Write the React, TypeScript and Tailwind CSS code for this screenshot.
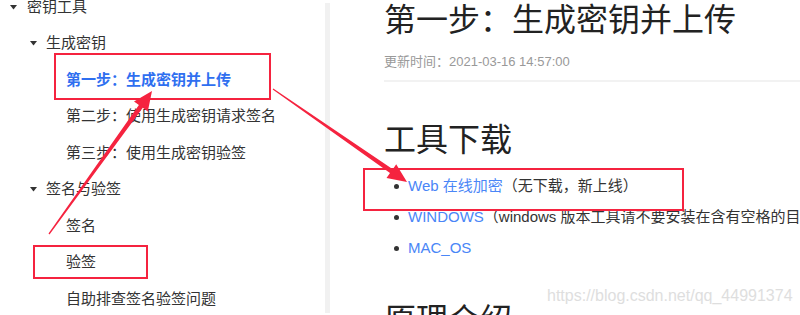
import type { ReactNode } from 'react'

const FONT = '"Liberation Sans", "Noto Sans CJK SC", sans-serif'
const RED = '#f5233f'

type NavRow = { label: string; level: 0 | 1 | 2; caret?: boolean; active?: boolean }

const NAV: NavRow[] = [
  { label: '密钥工具', level: 0, caret: true },
  { label: '生成密钥', level: 1, caret: true },
  { label: '第一步：生成密钥并上传', level: 2, active: true },
  { label: '第二步：使用生成密钥请求签名', level: 2 },
  { label: '第三步：使用生成密钥验签', level: 2 },
  { label: '签名与验签', level: 1, caret: true },
  { label: '签名', level: 2 },
  { label: '验签', level: 2 },
  { label: '自助排查签名验签问题', level: 2 },
]

const INDENT = ['pl-[27px]', 'pl-[46px]', 'pl-[66px]']

function Caret({ level }: { level: number }) {
  return (
    <svg
      width="7"
      height="5"
      viewBox="0 0 7 5"
      className={level === 0 ? 'absolute left-[10px] top-[16px]' : 'absolute left-[30px] top-[16px]'}
    >
      <path d="M0 0h7L3.5 4.5z" fill="#333" />
    </svg>
  )
}

// tapered arrow: thin tail, thick shaft near the head, wide triangular head
function arrowPoints(x1: number, y1: number, x2: number, y2: number) {
  const dx = x2 - x1
  const dy = y2 - y1
  const len = Math.hypot(dx, dy)
  const ux = dx / len
  const uy = dy / len
  const nx = -uy
  const ny = ux
  const head = 19
  const hw = 8.5
  const sw = 2.4
  const tw = 0.6
  const bx = x2 - ux * head
  const by = y2 - uy * head
  const p = (x: number, y: number) => `${x.toFixed(1)},${y.toFixed(1)}`
  return [
    p(x1 + nx * tw, y1 + ny * tw),
    p(bx + nx * sw, by + ny * sw),
    p(bx + nx * hw, by + ny * hw),
    p(x2, y2),
    p(bx - nx * hw, by - ny * hw),
    p(bx - nx * sw, by - ny * sw),
    p(x1 - nx * tw, y1 - ny * tw),
  ].join(' ')
}

function Bullet({ children }: { children: ReactNode }) {
  return (
    <li className="flex h-[31px] items-center whitespace-nowrap">
      <span className="ml-[10px] mr-[9px] size-[5px] shrink-0 rounded-full bg-[#333]" />
      {children}
    </li>
  )
}

export default function App() {
  return (
    <div
      className="relative flex h-[315px] w-[800px] overflow-hidden bg-white text-[#333]"
      style={{ fontFamily: FONT }}
    >
      {/* Sidebar tree */}
      <nav className="w-[325px] shrink-0">
        <ul className="-mt-[11.25px]">
          {NAV.map((row) => (
            <li
              key={row.label}
              className={`relative flex h-[36.5px] items-center whitespace-nowrap text-[15px] ${INDENT[row.level]} ${
                row.active ? 'font-bold text-[#2f6ff0]' : 'text-[#333]'
              }`}
            >
              {row.caret && <Caret level={row.level} />}
              {row.label}
            </li>
          ))}
        </ul>
      </nav>

      {/* Scrollbar track */}
      <div className="mt-[3px] h-[310px] w-[5px] shrink-0 bg-[#f1f1f1]" />

      {/* Article */}
      <main className="min-w-0 flex-1 pl-[54px]">
        <h1 className="h-[40px] whitespace-nowrap text-[32px] leading-[40px] text-[#222]">
          第一步：生成密钥并上传
        </h1>
        <p className="mt-[12px] h-[20px] text-[13px] leading-[20px] text-[#999]">
          更新时间：2021-03-16 14:57:00
        </p>
        <div className="mt-[8px] h-[2px] bg-[#f2f2f2]" />

        <h2 className="mt-[38px] h-[40px] text-[32px] leading-[40px] text-[#222]">工具下载</h2>
        <ul className="mt-[10.5px] text-[15px] text-[#333]">
          <Bullet>
            <span className="text-[#4a86f7]">Web 在线加密</span>
            <span>（无下载，新上线）</span>
          </Bullet>
          <Bullet>
            <span className="text-[#4a86f7]">WINDOWS</span>
            <span>（windows 版本工具请不要安装在含有空格的目录下）</span>
          </Bullet>
          <Bullet>
            <span className="text-[#4a86f7]">MAC_OS</span>
          </Bullet>
        </ul>

        <h2 className="mt-[36.5px] h-[40px] whitespace-nowrap text-[32px] leading-[40px] text-[#222]">
          原理介绍
        </h2>
      </main>

      {/* Watermark */}
      <span className="pointer-events-none absolute left-[547px] top-[286px] whitespace-nowrap text-[16px] leading-[20px] text-[#dedede]">
        https://blog.csdn.net/qq_44991374
      </span>

      {/* Annotation boxes */}
      <div className="pointer-events-none absolute left-[54px] top-[53px] h-[47px] w-[217px] border-[2.5px] border-[#f5233f]" />
      <div className="pointer-events-none absolute left-[33px] top-[245px] h-[34px] w-[115px] border-[2.5px] border-[#f5233f]" />
      <div className="pointer-events-none absolute left-[363px] top-[168px] h-[43px] w-[321px] border-[2.5px] border-[#f5233f]" />

      {/* Annotation arrows */}
      <svg className="pointer-events-none absolute inset-0" width="800" height="315" viewBox="0 0 800 315">
        <polygon points={arrowPoints(49, 234, 152, 91)} fill={RED} />
        <polygon points={arrowPoints(273, 89, 407, 182)} fill={RED} />
      </svg>
    </div>
  )
}
